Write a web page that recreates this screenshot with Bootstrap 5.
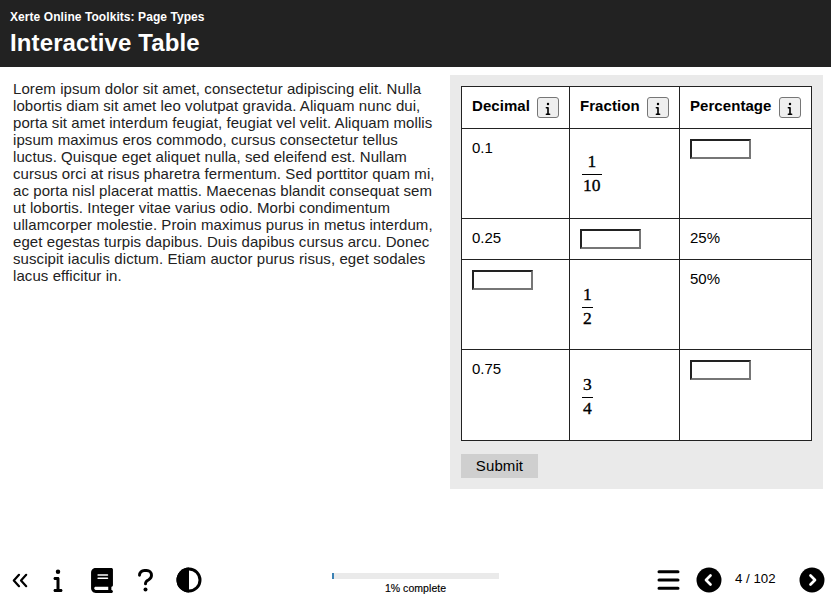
<!DOCTYPE html>
<html lang="en">
<head>
<meta charset="utf-8">
<meta name="viewport" content="width=device-width, initial-scale=1">
<title>Interactive Table</title>
<link href="https://cdn.jsdelivr.net/npm/bootstrap@5.3.0/dist/css/bootstrap.min.css" rel="stylesheet">
<style>
body{font-family:"Liberation Sans",Arial,sans-serif;font-size:15px;line-height:17px;color:#000;height:607px;overflow:hidden}
.page-head{background:#222;color:#fff;height:67px;padding:9px 10px 0}
.page-head h2{font-size:12px;line-height:16px;letter-spacing:.07px}
.page-head h1{font-size:24px;line-height:28px;margin-top:4px!important;letter-spacing:.12px}
.intro{width:450px;padding:13px 0 0 13px;color:#222;white-space:nowrap;letter-spacing:.075px}
.panel{width:373px;height:414px;margin-top:8px;padding:11px;background:#eaeaea}
.quiz{width:351px;table-layout:fixed;border-collapse:collapse;background:#fff}
.quiz th,.quiz td{border:1px solid #222;padding:10px;vertical-align:top;white-space:nowrap}
.quiz th{padding-right:0;letter-spacing:.06px}
.quiz th:last-child .info-btn{margin-left:8px}
.info-btn{width:22px;height:21px;border:1px solid #767676;border-radius:3px;background:#efefef;margin-left:7px}
.info-btn svg{margin-top:1px}
.blank{display:block;width:61px;height:20px;border:2px solid;border-color:#222 #767676 #767676 #222;border-radius:0;padding:0;background:#fff}
.fraction{font-family:"Liberation Serif",serif;font-size:17.5px;line-height:19px;-webkit-text-stroke:.35px #000;text-align:center;margin:15px 0 0 2px}
.fraction.wide{margin-top:13px}
.fraction span{display:block;padding:0 1px 3px}
.fraction span + span{border-top:1px solid #000;padding:1px 1px 0}
.submit{width:77px;height:24px;margin-top:13px;background:#cfcfcf;border-radius:0;font-size:15px;line-height:24px;letter-spacing:.1px}
.foot{height:54px}
.meter{width:167px;height:6px;border-radius:0;background:#eaeaea}
.meter .progress-bar{background:#3c82b4}
.meter-label{font-size:10.5px;line-height:12px;margin-top:3px;-webkit-text-stroke:.15px #000;letter-spacing:.05px}
.tools{width:332px;padding-left:12px}
.t2{margin-left:25px}.t3{margin-left:28px}.t4{margin-left:25px}.t5{margin-left:23px}
.mid{width:167px;padding-top:20px}
.pager{width:332px;padding:0 6px 0 158px}
.r2{margin-left:16px}
.count{font-size:13.3px;width:65px;margin:0 11.500px 3px 13px;padding-right:12px}
svg{display:block;flex:none}
</style>
<script src="https://cdn.jsdelivr.net/npm/bootstrap@5.3.0/dist/js/bootstrap.bundle.min.js"></script>
</head>
<body class="d-flex flex-column m-0 bg-white">
<svg width="0" height="0" class="position-absolute">
<symbol id="info" viewBox="0 0 192 512"><path d="M48 80a48 48 0 1 1 96 0A48 48 0 1 1 48 80zM0 224c0-17.700 14.300-32 32-32H96c17.700 0 32 14.300 32 32V448h32c17.700 0 32 14.300 32 32s-14.300 32-32 32H32c-17.700 0-32-14.300-32-32s14.300-32 32-32H64V256H32c-17.700 0-32-14.300-32-32z"/></symbol>
</svg>
<header class="page-head flex-shrink-0">
<h2 class="fw-bold m-0">Xerte Online Toolkits: Page Types</h2>
<h1 class="fw-bold m-0">Interactive Table</h1>
</header>
<main class="d-flex flex-grow-1">
<div class="intro flex-shrink-0">Lorem ipsum dolor sit amet, consectetur adipiscing elit. Nulla<br>lobortis diam sit amet leo volutpat gravida. Aliquam nunc dui,<br>porta sit amet interdum feugiat, feugiat vel velit. Aliquam mollis<br>ipsum maximus eros commodo, cursus consectetur tellus<br>luctus. Quisque eget aliquet nulla, sed eleifend est. Nullam<br>cursus orci at risus pharetra fermentum. Sed porttitor quam mi,<br>ac porta nisl placerat mattis. Maecenas blandit consequat sem<br>ut lobortis. Integer vitae varius odio. Morbi condimentum<br>ullamcorper molestie. Proin maximus purus in metus interdum,<br>eget egestas turpis dapibus. Duis dapibus cursus arcu. Donec<br>suscipit iaculis dictum. Etiam auctor purus risus, eget sodales<br>lacus efficitur in.</div>
<section class="panel flex-shrink-0">
<table class="quiz">
<colgroup><col style="width:108px"><col style="width:110px"><col style="width:132px"></colgroup>
<thead><tr style="height:42px">
<th><div class="d-flex"><span>Decimal</span><button class="info-btn d-flex align-items-center justify-content-center p-0" aria-label="Decimal info"><svg width="6" height="13"><use href="#info"/></svg></button></div></th>
<th><div class="d-flex"><span>Fraction</span><button class="info-btn d-flex align-items-center justify-content-center p-0" aria-label="Fraction info"><svg width="6" height="13"><use href="#info"/></svg></button></div></th>
<th><div class="d-flex"><span>Percentage</span><button class="info-btn d-flex align-items-center justify-content-center p-0" aria-label="Percentage info"><svg width="6" height="13"><use href="#info"/></svg></button></div></th>
</tr></thead>
<tbody>
<tr style="height:90px"><td>0.1</td><td><div class="fraction wide d-inline-block"><span>1</span><span>10</span></div></td><td><input class="blank" aria-label="Percentage"></td></tr>
<tr style="height:41px"><td>0.25</td><td><input class="blank" aria-label="Fraction"></td><td>25%</td></tr>
<tr style="height:90px"><td><input class="blank" aria-label="Decimal"></td><td><div class="fraction d-inline-block"><span>1</span><span>2</span></div></td><td>50%</td></tr>
<tr style="height:91px"><td>0.75</td><td><div class="fraction d-inline-block"><span>3</span><span>4</span></div></td><td><input class="blank" aria-label="Percentage"></td></tr>
</tbody>
</table>
<button class="submit btn border-0 p-0 text-black">Submit</button>
</section>
</main>
<footer class="foot d-flex flex-shrink-0 justify-content-between">
<div class="d-flex align-items-center h-100 tools">
<svg class="t1" width="16" height="15" viewBox="0 0 16 15" fill="none" stroke="#000" stroke-width="2.200" stroke-linecap="round" stroke-linejoin="round"><path d="M7 1.800L1.800 7.500 7 13.200M14.200 1.800L9 7.500l5.200 5.700"/></svg>
<svg class="t2" width="10" height="24"><use href="#info"/></svg>
<svg class="t3" width="22" height="25" viewBox="0 0 448 512"><path d="M96 0C43 0 0 43 0 96V416c0 53 43 96 96 96H416c17.700 0 32-14.300 32-32s-14.300-32-32-32V384c17.700 0 32-14.300 32-32V32c0-17.700-14.300-32-32-32H96zm0 384H352v64H96c-17.700 0-32-14.300-32-32s14.300-32 32-32zm32-240c0-8.800 7.200-16 16-16H336c8.800 0 16 7.200 16 16s-7.200 16-16 16H144c-8.800 0-16-7.200-16-16zm16 48H336c8.800 0 16 7.200 16 16s-7.200 16-16 16H144c-8.800 0-16-7.200-16-16s7.200-16 16-16z"/></svg>
<svg class="t4" width="15" height="23" viewBox="0 0 15 23"><path d="M1.500 6.300C1.500 3.500 3.700 1.500 6.400 1.500h2.200c2.800 0 4.900 2.100 4.900 4.800 0 2.100-1 3.400-2.800 4.400-2.100 1.100-3.200 1.700-3.200 3.800v.4" fill="none" stroke="#000" stroke-width="2.900" stroke-linecap="round"/><circle cx="7.500" cy="20.500" r="2"/></svg>
<svg class="t5" width="26" height="26" viewBox="0 0 26 26"><circle cx="13" cy="13" r="11" fill="#fff" stroke="#000" stroke-width="3"/><path d="M13 .5a12.500 12.500 0 0 0 0 25z"/></svg>
</div>
<div class="d-flex flex-column align-items-center mid">
<div class="progress meter"><div class="progress-bar" style="width:1.2%"></div></div>
<div class="meter-label">1% complete</div>
</div>
<div class="d-flex align-items-center h-100 pager">
<svg class="r1" width="23" height="20" viewBox="0 0 23 20" stroke="#000" stroke-width="3" stroke-linecap="round"><path d="M2 1.700h19M2 10h19M2 18.300h19"/></svg>
<svg class="r2" width="26" height="26" viewBox="0 0 26 26"><circle cx="13" cy="13" r="12.500"/><path d="M14.500 8.500L10 13l4.500 4.500" fill="none" stroke="#fff" stroke-width="2.700" stroke-linecap="round" stroke-linejoin="round"/></svg>
<div class="count text-center text-nowrap">4 / 102</div>
<svg class="r3" width="26" height="26" viewBox="0 0 26 26"><circle cx="13" cy="13" r="12.500"/><path d="M11.500 8.500L16 13l-4.500 4.500" fill="none" stroke="#fff" stroke-width="2.700" stroke-linecap="round" stroke-linejoin="round"/></svg>
</div>
</footer>
</body>
</html>
